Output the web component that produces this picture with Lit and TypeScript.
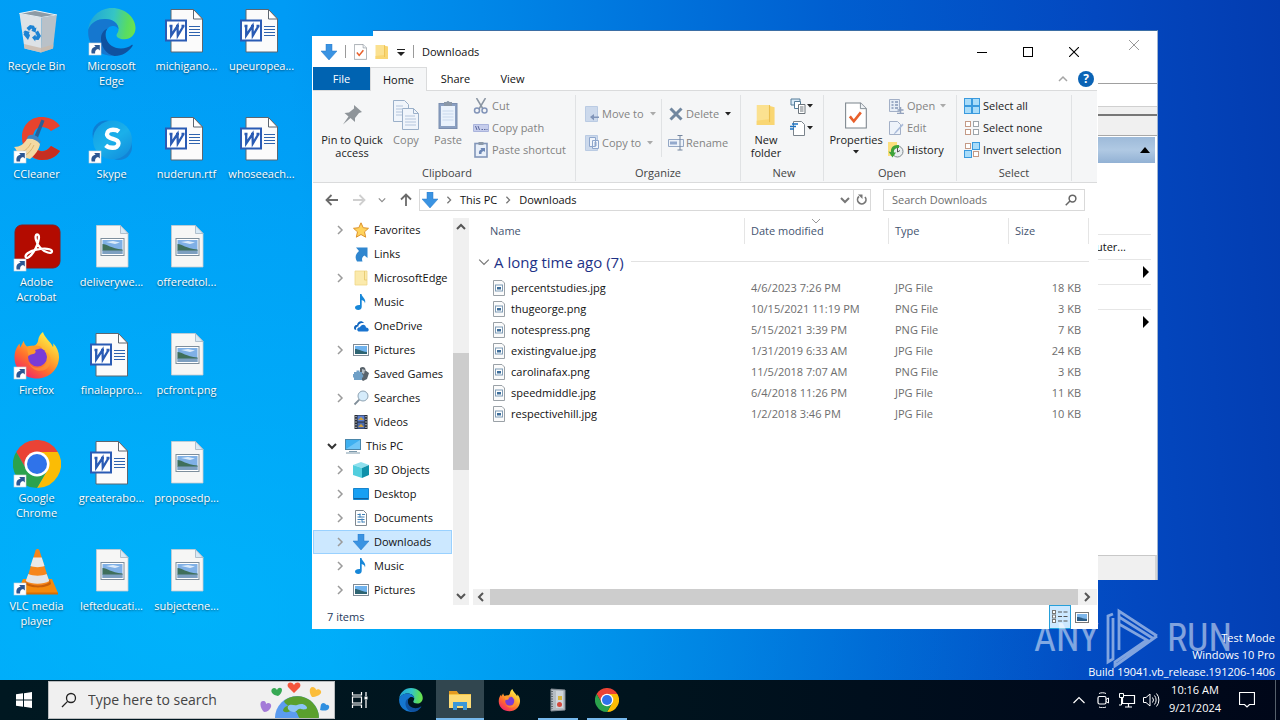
import { LitElement, html, css, svg, nothing, type TemplateResult } from "lit";
import { customElement } from "lit/decorators.js";
import { classMap } from "lit/directives/class-map.js";

type Icon = TemplateResult;

const box = (w: number, h: number, body: unknown, vb = `0 0 ${w} ${h}`): Icon =>
  html`<svg width=${w} height=${h} viewBox=${vb} fill="none" aria-hidden="true">${body}</svg>`;

/* ---------- desktop icons, 48 x 48 ---------- */

const shortcut = svg`<g><rect x="1" y="35" width="12" height="12" fill="#fff" stroke="#c9d3dc" stroke-width=".6"/>
  <path d="M3.600 45.400c-.8-3.800.8-6.200 4-6.600L6.200 37h5.600v5.600l-1.700-1.500c-2.300.5-3.200 1.800-3 4.300z" fill="#2c5793"/></g>`;

const recycle = box(48, 48, svg`
  <path d="M6.500 5.500 22 2.500l21.800 4.500-15.300 2.500z" fill="#8d9ba5" stroke="#eef4f8" stroke-width="1"/>
  <path d="M6.500 5.500 28.500 9.500 28 44.500 11.500 40.500z" fill="#dde2e6"/>
  <path d="M28.500 9.500 43.800 7 40 40.500 28 44.500z" fill="#b9c1c8"/>
  <path d="M11 36l17 4 12.500-3.500-.5 4-12 4-16.500-4z" fill="#cbb9aa" opacity=".8"/>
  <g fill="#1c83d4"><path d="M13.500 20l3.500-3 4 .8 1 2.200 1.400-.6-.8 5-4.400-1.600 1.200-.8-1-1.600-2.400 2.600z"/>
  <path d="M25 22.500l3 5.500-2.500 4-3.200-.2v1.600l-3.300-3.800 3.600-3v1.600h1.400l-1.800-3.600z"/>
  <path d="M12 22.500l5 1.500-1.200 1 1.200 2.500-2 4.500-4.500-5.500.9-2-1.400.1z"/></g>`);

const edgeBody = svg`
  <path d="M24 0C37 0 47.500 9.500 47.500 20c0 7-5 11.200-11 11.200-5 0-8-2-8-4 0-1.500 2-2.500 2-6C30.500 15.500 25 11 17 11 9 11 2.500 16 .3 21.500 1.500 9.500 11.500 0 24 0z" fill="url(#eg)"/>
  <path d="M.3 21.500C3 14 10 11 17 11c8 0 13.500 4.500 13.500 10.200-1.500-2.700-4-3.200-6-3.200-4 0-7.500 4.500-7.500 11 0 9 6 16 14 18C14 51-1.500 38.500.3 21.500z" fill="#1577cf"/>
  <path d="M19.500 20.500C15.500 24.500 17 40 33 40.500c4 0 8-1.500 10.500-3.500 1-.6 1.600.2 1 1C40.500 44 34.500 48 26.500 48 18 46.500 12.500 38 13 30c.3-4.500 2.500-8 6.500-9.500z" fill="#0f52a0"/>`;
const edgeDefs = svg`<defs><linearGradient id="eg" x1="0" y1="14" x2="48" y2="22" gradientUnits="userSpaceOnUse"><stop offset="0" stop-color="#1ea5d8"/><stop offset=".5" stop-color="#35c5c5"/><stop offset=".8" stop-color="#58dc62"/><stop offset="1" stop-color="#6fe34a"/></linearGradient></defs>`;
const edge = (s: number, link = false) => box(s, s, svg`${edgeDefs}${edgeBody}${link ? shortcut : nothing}`, "0 0 48 48");

const ccleaner = box(48, 48, svg`
  <path d="M47 10C42 3 35 1 28 1 17 1 9 10 9 21c0 13 9 23 20 23 8 0 14-3 18-9l-9-5c-3 4-6 5-9 5-6 0-9-6-9-13 0-6 3-11 8-11 4 0 7 1 10 4z" fill="#e8432e"/>
  <path d="M47 35c-4 6-10 9-18 9-3 0-6-1-9-3l4-7c6 3 10 1 14-4z" fill="#c62f22"/>
  <path d="M28.500 3.500l3 1.200-7 18-3.500-1.500z" fill="#2c5f95"/>
  <path d="M15 20c4-3 10-1 13 6l-4 3c-3-3-6-4-11-4z" fill="#3e86c5"/>
  <path d="M14 23c5-1 10 1 13 5-1 6-5 11-10 15-5-1-9-3-12-6l-3-5-1-1c6 0 10-3 13-8z" fill="#f4d9a2"/>
  <path d="M6 36c5 0 9-3 12-9M11 40c4-2 8-6 10-11" stroke="#dcb46e" stroke-width="1"/>${shortcut}`);

const skype = box(48, 48, svg`
  <circle cx="18" cy="18" r="13.500" fill="#0d7fd4"/><circle cx="31" cy="31" r="13" fill="#1284d6"/>
  <circle cx="24.500" cy="24" r="19.500" fill="url(#sk)"/>
  <defs><linearGradient id="sk" x1="10" y1="6" x2="36" y2="44" gradientUnits="userSpaceOnUse"><stop offset="0" stop-color="#119fe6"/><stop offset=".5" stop-color="#1bb0ea"/><stop offset="1" stop-color="#128fdd"/></linearGradient></defs>
  <path d="M31 15.500c-1.600-1.300-3.600-1.800-6-1.800-3.600 0-6 1.700-6 4.500 0 6 11.500 3.300 11.500 9 0 3-2.600 4.600-5.900 4.600-3 0-5.200-.8-7-2.400" stroke="#fff" stroke-width="4.400"/>${shortcut}`);

const acrobat = box(48, 48, svg`
  <rect x="2" y="1" width="45" height="43" rx="7" fill="#b30b00" stroke="#8b1a1a" stroke-width="1"/>
  <path d="M13 33.500c-2-2.500 3-6.200 10.500-7.800 7.500-1.700 15.500-1.200 15.500 1.600 0 3.500-7.500.8-11.500-3.300C23 19.500 21 11 24 10.500c3.300-.4 2 7-1.200 13.500C19.500 30.500 14.800 35.500 13 33.500z" stroke="#fff" stroke-width="2.300"/>${shortcut}`);

const firefoxBody = svg`
  <defs><linearGradient id="ff" x1="38" y1="4" x2="10" y2="44" gradientUnits="userSpaceOnUse"><stop offset="0" stop-color="#fff04a"/><stop offset=".35" stop-color="#ffb02e"/><stop offset=".65" stop-color="#ff6d2d"/><stop offset="1" stop-color="#f0246b"/></linearGradient></defs>
  <path d="M30 0c1 5 7 9 10 15 .5-1 .4-2.500.2-3.800C44 15 46 20 46 25c0 12-9.500 21.500-22 21.500S1.500 37.500 1.500 25.500C1.500 19 4 14.500 6.500 11.500l.7 4 3.500-6.700c.3 2 1.300 4.200 3.300 5.700 2.500-1 5-1 7-.4C23 13 25 11 25.200 8 25.500 5 27.500 1.500 30 0z" fill="url(#ff)"/>
  <circle cx="24.500" cy="25" r="9.500" fill="#7a3bd6"/>
  <path d="M14 16c4-3 12-3.500 15 0l-7 2c2 3-1 4-4 4.500-2 .5-2.500 2-2.500 2z" fill="#ff9a2b"/>
  <path d="M15 29c3 8 13 9 18 3 3-4 2-10-2-13 7 2 8 10 5 15-5 8-18 6-21-5z" fill="#ff9a36" opacity=".6"/>`;
const firefox = (s: number, link = false) => box(s, s, svg`${firefoxBody}${link ? shortcut : nothing}`, "0 0 48 48");

const chromeBody = svg`
  <path d="M24 24V12H44.800A24 24 0 0 1 24 48l10.400-18z" fill="#fbbc05"/>
  <path d="M3.200 12A24 24 0 0 1 44.800 12H24L13.600 30z" fill="#ea4335"/>
  <path d="M3.200 12 13.600 30c2 3.600 6 6 10.400 6 4.400 0 8-2 10.400-6L24 48A24 24 0 0 1 3.200 12z" fill="#2ba24c"/>
  <circle cx="24" cy="24" r="12.500" fill="#fff"/><circle cx="24" cy="24" r="10" fill="#2f73ea"/>`;
const chrome = (s: number, link = false) => box(s, s, svg`${chromeBody}${link ? shortcut : nothing}`, "0 0 48 48");

const vlc = box(48, 48, svg`
  <path d="M10 31h29l6 14H4z" fill="#f58a0c"/><path d="M4 44.500h41v2H4z" fill="#d96d00"/>
  <path d="M12 36c5 4.500 21 4.500 26 0l-1-4H13z" fill="#c95f08"/>
  <path d="M22.500 2.500c.6-2 3.400-2 4 0L36.500 34c-5 4.500-18 4.500-23.500 0z" fill="#f6861b"/>
  <path d="M20.200 9.500h8.600l2.700 8.500c-3.500 1.500-10.500 1.500-14 0z" fill="#e9e9e9"/>
  <path d="M15.300 26c5 2.200 13.500 2.200 18.400 0l2.600 7c-6 3.500-17.500 3.500-23.600 0z" fill="#e4e4e4"/>${shortcut}`);

const wordDoc = box(48, 48, svg`
  <path d="M8 1.500h22.500l9 9.500v33H8z" fill="#fbfbfb" stroke="#5d6670" stroke-width="1"/>
  <path d="M30.500 1.500V11h9z" fill="#fff" stroke="#5d6670" stroke-width="1"/>
  <path d="M26 18.500h11M26 21.500h11M26 24.500h11M26 27.500h11" stroke="#2f63ae" stroke-width="1.200"/>
  <rect x="3" y="12.500" width="20" height="20" fill="#fff" stroke="#2a5bb4" stroke-width="2"/>
  <path d="M6.500 18h3M13 18h3M18.500 18h3M8.200 18v9.500L14.500 18l.3 9.500L20.500 18" stroke="#2a5bb4" stroke-width="2.300"/>`);

const picDoc = box(48, 48, svg`
  <path d="M8.500 1.500h24l7.500 8V43H8.500z" fill="#f6f6f5" stroke="#c9cccf" stroke-width=".8"/>
  <path d="M32.500 1.500v8H40z" fill="#d8e9f5" stroke="#a3b4c2" stroke-width=".8"/>
  <rect x="13" y="14.500" width="23" height="17" fill="#fff" stroke="#7d8e9c"/>
  <rect x="14.500" y="16" width="20" height="14" fill="#7fb0e6"/>
  <path d="M18 18l7-1 7 1.500-5 1.500z" fill="#dcebfa"/>
  <path d="M14.500 20c5 0 8 4.500 20 5.500v1.500h-20z" fill="#3f6f5b"/><path d="M14.500 26.500h20V30h-20z" fill="#7d9fc0"/>`);

/* ---------- small icons ---------- */

const down = (s: number) => box(s, s, svg`<path d="M5 0h6v7h5l-8 9L0 7h5z" fill="#3a93e2" stroke="#2a7bc8" stroke-width=".5"/>`, "0 0 16 16");
const note = box(16, 16, svg`<path d="M7 0h1.500c.5 3.500 5 4.500 3.500 9.500-.3-2-1.700-3-3.300-3.400v6.900c0 1.900-1.600 3-3.400 3C3.200 16 2 15 2 13.500c0-1.700 2-2.700 5-2.500z" fill="#1787d8"/>`);
const picture = box(16, 16, svg`<rect x=".5" y="2.500" width="15" height="11" fill="#fff" stroke="#7f8b96"/><path d="M2 4h12v8H2z" fill="#6fb3ee"/><path d="M2 7c4 0 6 2.500 12 3v2H2z" fill="#2e6472"/>`);
const star = box(16, 16, svg`<path d="M8 .8l2.200 4.900 5.300.6-4 3.500 1.200 5.400L8 12.500l-4.700 2.700 1.200-5.400-4-3.500 5.300-.6z" fill="#ffd35c" stroke="#dd922b"/>`);
const link = box(16, 16, svg`<path d="M3 1.500h11.500V12l-3-2.500c-2.500 1.500-3 3.500-2 6H4C1.500 11.500 2.500 8 6 5z" fill="#2f86cf"/>`);
const folder = (w: number, h: number) => box(w, h, svg`<path d="M1.500 1h9v14h-9z" fill="#fbe190"/><path d="M10 1.500 14 2.500V15H1.500v-3l8.500-1z" fill="#f9d673"/><path d="M10.500 1v12" stroke="#e8b945" stroke-width=".6"/>`, "1 0 14 16");
const paleFolder = box(16, 16, svg`<path d="M2 1h12v14H2z" fill="#fbeaac" stroke="#f0d787" stroke-width=".8"/><path d="M11.500 1v9H14" stroke="#e9cd76"/>`);
const cloud = box(16, 16, svg`<path d="M1.500 11.500C0 8.500 2.500 6.500 4 7 4.500 3 9 2 11 5c-4-.5-6 2-5.500 3.500C3 8.500 2.500 11 3.500 12z" fill="#1165bd"/><path d="M5.500 13.500C3 12 4.500 8.800 7 9.300 8 5.500 13 6 13 9.500c3.500.2 3.500 4 .6 4z" fill="#1a74cf"/>`);
const games = box(16, 16, svg`<path d="M7 2c3-2 6-.5 5.500 2.500L16 7l-2 6-4 2-2-2-1-5z" fill="#59636b"/><path d="M1 6h2.500V4.500h3V6H9v2.500h1.200v3H9V14H1v-2.500H0V8h1z" fill="#6f9fc6"/><path d="M9 3l3 1-1 4-2-1z" fill="#b8c0c6"/>`);
const lens = box(16, 16, svg`<circle cx="10" cy="6" r="5" fill="#d6ecfb" stroke="#8ea3b3"/><path d="M6.300 9.700 1.500 14.500" stroke="#7f8d98" stroke-width="1.800"/>`);
const film = box(16, 16, svg`<path d="M1.500 1h13v14h-13z" fill="#262b33"/><path d="M4.500 1.500h7v6h-7z" fill="#5b7fd0"/><path d="M4.500 8.500h7v6h-7z" fill="#4d6cae"/><path d="M5 6l3-3 3 3zM5 13l3-3 3 3z" fill="#d2a13a"/><path d="M3 2v13M13 2v13" stroke="#fff" stroke-width="1" stroke-dasharray="1.200 1.500"/>`);
const pc = box(16, 16, svg`<rect x=".5" y="1.500" width="15" height="10" fill="#3fb0f0" stroke="#4a86aa"/><path d="M1 11 15 2v9z" fill="#6fc6f7"/><path d="M4 13.500h8M1 15h14" stroke="#7c99ab"/>`);
const cube = box(16, 16, svg`<path d="M0 3l8-3 8 3-7 3z" fill="#8fe0ee"/><path d="M0 3l9 3v10l-9-3z" fill="#52cede"/><path d="M9 6l7-3v10l-7 3z" fill="#0f91aa"/>`);
const desk = box(16, 16, svg`<path d="M.5 2.500h15v11H.5z" fill="#18a0f3" stroke="#1784cd"/><path d="M1 12.500h14" stroke="#135f9a"/>`);
const docs = box(16, 16, svg`<path d="M2.500.5h8l3 3v12h-11z" fill="#fff" stroke="#7f8890"/><path d="M4.500 4.500h3M4.500 7h7M4.500 9.500h7M4.500 12h3M9 12h3M9 4.500h3" stroke="#3e80b8" stroke-width="1.200"/><path d="M7 3.500v4M9 8.500v4" stroke="#3e80b8"/>`);
const fileIcon = box(12, 16, svg`<path d="M.5.500h8.500l2.500 2.500v12.500H.5z" fill="#fbfbfb" stroke="#9aa1a7"/><rect x="2.500" y="5" width="7" height="6" fill="#fff" stroke="#7f9cb6"/><path d="M4 7h4v2.500H4z" fill="#3f6e9a"/>`);
const chev = (d: "r" | "d" | "u" | "l", c = "#8c8c8c", w = 1.500, s = 10) => {
  const p = { r: "M3 1l4 4-4 4", l: "M7 1 3 5l4 4", d: "M1 3l4 4 4-4", u: "M1 7l4-4 4 4" }[d];
  return box(s, s, svg`<path d=${p} stroke=${c} stroke-width=${w}/>`, "0 0 10 10");
};
const caret = (c = "#222") => box(6, 4, svg`<path d="M0 0h6L3 3.500z" fill=${c}/>`);
const checkDoc = (w: number, h: number) => box(w, h, svg`<path d="M.7.700h17l6.500 6.500v22H.7z" fill="#fff" stroke="#7b848c" stroke-width="1.200"/><path d="M17.500.7v6.500h6.500" fill="#eef2f5" stroke="#7b848c"/><path d="M5.500 16l4.500 5.500 8-10" stroke="#e8602c" stroke-width="3"/>`, "0 0 25 30");

const pinIcon = box(24, 24, svg`<path d="M14 2l8 7-3 1-4 5 0 4-4.500-4L3 21.500l5.500-8-4-3.500 4.500-.5 5-4z" fill="#8e9499"/>`);
const copyIcon = box(26, 30, svg`<g stroke="#9bb0c9" fill="#f0f5fb"><path d="M.5.500h11l4 4v17H.5z"/><path d="M9.500 8.500h11l5 5v16h-16z"/></g><path d="M3 6h7M3 9h7M3 12h6M3 15h6M12 16h10M12 19h11M12 22h11M12 25h11" stroke="#b4c5dc"/><path d="M20.500 8.500v5h5" stroke="#9bb0c9"/>`);
const pasteIcon = box(20, 30, svg`<rect x="1" y="3.500" width="18" height="25" fill="#8ba0c2" stroke="#7b8eaf"/><rect x="3" y="6" width="14" height="20" fill="#eaf2fc"/><path d="M6 2h2.500a1.700 1.700 0 0 1 3 0H14v4H6z" fill="#8b98a8"/><path d="M4.500 11h11M4.500 14h11M4.500 17h11M4.500 20h11" stroke="#c9d8ec"/>`);
const cutIcon = box(16, 16, svg`<path d="M3.500 0 10 11M12.500 0 6 11" stroke="#8b96a3" stroke-width="1.500"/><circle cx="4" cy="12.500" r="2.500" stroke="#8294b8" stroke-width="1.500"/><circle cx="11.500" cy="12.500" r="2.500" stroke="#8294b8" stroke-width="1.500"/>`);
const pathIcon = box(16, 16, svg`<path d="M.5 4.500h15v7H.5z" fill="#c6cdec" stroke="#aab4dc"/><path d="M2.500 6l1.500 4M5 6l1.500 4M8.500 9.500h1.500M11 9.500h1.500M13.500 9.500h1" stroke="#5b689d"/>`);
const pasteLink = box(16, 16, svg`<rect x="2" y="1.500" width="12" height="13.500" fill="#e8eff9" stroke="#8296b9" stroke-width="1.600"/><path d="M5.500 0h5v3h-5z" fill="#8b98a8"/><path d="M6 12c-.5-3 .8-4.200 2.300-4.500L7.500 6H12v4l-1.200-1C9 9.400 8.300 10.500 8.500 12z" fill="#6d87b5"/>`);
const moveIcon = box(14, 16, svg`<path d="M.5.500h12v15H.5z" fill="#ccd9ec" stroke="#bacbe3"/><path d="M14 12H9v2.500L5 11l4-3v2.500h5z" fill="#8094b8"/>`);
const copyTo = box(14, 16, svg`<path d="M.5.500h12v15H.5z" fill="#ccd9ec" stroke="#bacbe3"/><path d="M4.500 2.500h6v9h-6z M7.500 5.500h6v8h-6z" fill="#f1f5fb" stroke="#8ea6cc"/><path d="M9 8h3M9 10h3" stroke="#8ea6cc"/>`);
const delIcon = box(14, 14, svg`<path d="M1.500 1.500l11 11M12.500 1.500l-11 11" stroke="#71879f" stroke-width="3"/>`);
const renameIcon = box(16, 16, svg`<path d="M.5 4.500h15v7H.5z" fill="#edf2f9" stroke="#94a7c4"/><path d="M2 6.500h7v3H2z" fill="#93a9cc"/><path d="M9.500.500h5M9.500 15h5M12 1v14" stroke="#74869f"/>`);
const newItem = box(16, 16, svg`<path d="M1 1h9v6H1z" fill="#dbeaf7" stroke="#557d99"/><path d="M4.500 3.500h6v7h-6z" fill="#fff" stroke="#557d99"/><path d="M8.500 6.500h6.500v9H8.500z" fill="#fff" stroke="#6c747b"/><path d="M10 9h3.500M10 11h3.500M10 13h3.500" stroke="#6c747b"/>`);
const easy = box(16, 16, svg`<path d="M3.500 1.500h8l3 3v11h-11z" fill="#fff" stroke="#7b848c"/><path d="M2 4h6M0 6.500h6M0 9h4" stroke="#1c74c5" stroke-width="1.500"/>`);
const openIcon = box(16, 16, svg`<path d="M1.500 1.500h10v12h-10z" fill="#e6edf6" stroke="#a3b0c7"/><path d="M3.500 4h2M7 4h3M3.500 7h2M7 7h3M3.500 10h2M7 10h3" stroke="#8395b7" stroke-width="1.500"/><path d="M12.500 9v6M9.500 12h6M9 15.500h7" stroke="#93a2bd" stroke-width="1.500"/>`);
const editIcon = box(16, 16, svg`<path d="M1.500 1.500h8l3 3v10h-11z" fill="#eef3fa" stroke="#a3b0c7"/><path d="M14.500 3.500 7 12l-1.500 2.500L8 13l7.500-8z" fill="#a9bbda"/>`);
const historyIcon = box(16, 16, svg`<path d="M0 0h9v14H0z" fill="#fbdf7d"/><circle cx="9.500" cy="9.500" r="5.500" fill="#e9eef0" stroke="#7f888e"/><path d="M9.500 6v4l2.500-1.500" stroke="#555"/><path d="M11 3C5 2.500 2.500 6 3 10L.5 9.500l4 6L8 10.500l-2 0C5.500 8 7 6 11 6z" fill="#3ea33b"/>`);
const grid4 = (fills: string[], strokes: string[]) => box(16, 16, svg`${[[1, 1], [9, 1], [1, 9], [9, 9]].map(([x, y], i) => {
  const big = fills[i] !== "#fff";
  return svg`<rect x=${big ? x - .5 : x + .5} y=${big ? y - .5 : y + .5} width=${big ? 7 : 5} height=${big ? 7 : 5} fill=${fills[i]} stroke=${strokes[i]}/>`;
})}`);
const B = "#a9dcf9", BS = "#3a9ade", W = "#fff", G = "#9da5ab", R = "#c49a86";
const selAll = grid4([B, B, B, B], [BS, BS, BS, BS]);
const selNone = grid4([W, W, W, W], [R, G, R, G]);
const selInv = grid4([W, B, B, W], [R, BS, BS, R]);

const lensLine = (s: number, c: string, w: number) => box(s, s, svg`<circle cx="10" cy="6" r="4.500" stroke=${c} stroke-width=${w}/><path d="M6.600 9.400 1 15" stroke=${c} stroke-width=${w}/>`, "0 0 16 16");
const arrow = (c: string, r = 0) => box(14, 14, svg`<path d="M13 7H2M6.500 2 1.500 7l5 5" stroke=${c} stroke-width="1.800" transform=${`rotate(${r} 7 7)`}/>`);

/* ---------- data ---------- */

const desktopIcons: [string, Icon][] = [
  ["Recycle Bin", recycle], ["CCleaner", ccleaner], ["Adobe Acrobat", acrobat], ["Firefox", firefox(48, true)], ["Google Chrome", chrome(48, true)], ["VLC media player", vlc],
  ["Microsoft Edge", edge(48, true)], ["Skype", skype], ["deliverywe...", picDoc], ["finalappro...", wordDoc], ["greaterabo...", wordDoc], ["lefteducati...", picDoc],
  ["michigano...", wordDoc], ["nuderun.rtf", wordDoc], ["offeredtol...", picDoc], ["pcfront.png", picDoc], ["proposedp...", picDoc], ["subjectene...", picDoc],
  ["upeuropea...", wordDoc], ["whoseeach...", wordDoc],
];

const navItems: { label: string; icon: Icon; open?: "r" | "d"; root?: boolean; on?: boolean }[] = [
  { label: "Favorites", icon: star, open: "r" }, { label: "Links", icon: link },
  { label: "MicrosoftEdge", icon: paleFolder, open: "r" }, { label: "Music", icon: note },
  { label: "OneDrive", icon: cloud }, { label: "Pictures", icon: picture, open: "r" },
  { label: "Saved Games", icon: games }, { label: "Searches", icon: lens, open: "r" },
  { label: "Videos", icon: film }, { label: "This PC", icon: pc, open: "d", root: true },
  { label: "3D Objects", icon: cube, open: "r" }, { label: "Desktop", icon: desk, open: "r" },
  { label: "Documents", icon: docs, open: "r" }, { label: "Downloads", icon: down(16), open: "r", on: true },
  { label: "Music", icon: note, open: "r" }, { label: "Pictures", icon: picture, open: "r" },
];

const files = [
  ["percentstudies.jpg", "4/6/2023 7:26 PM", "JPG File", "18 KB"],
  ["thugeorge.png", "10/15/2021 11:19 PM", "PNG File", "3 KB"],
  ["notespress.png", "5/15/2021 3:39 PM", "PNG File", "7 KB"],
  ["existingvalue.jpg", "1/31/2019 6:33 AM", "JPG File", "24 KB"],
  ["carolinafax.png", "11/5/2018 7:07 AM", "PNG File", "3 KB"],
  ["speedmiddle.jpg", "6/4/2018 11:26 PM", "JPG File", "11 KB"],
  ["respectivehill.jpg", "1/2/2018 3:46 PM", "JPG File", "10 KB"],
];

const shared = css`
  * { box-sizing: border-box; }
  svg { display: block; flex: none; }
  button { font: inherit; color: inherit; background: none; border: 0; padding: 0; margin: 0; text-align: inherit; }
  a { color: inherit; text-decoration: none; }
  input { font: inherit; min-width: 0; border: 0; padding: 0; background: none; outline: 0; }
`;

@customElement("explorer-window")
class ExplorerWindow extends LitElement {
  static styles = [shared, css`
    :host { display: flex; flex-direction: column; background: #fff; padding: 0 1px; color: #111; font: 11px/14px "Open Sans", "Noto Sans", sans-serif; }
    .title { display: flex; align-items: center; height: 31px; padding-left: 8px; flex: none; }
    .title .bar { width: 1px; height: 13px; background: #9a9a9a; }
    .quick { display: flex; align-items: center; gap: 8px; flex: 1; }
    .quick h1 { margin: 0; font-size: 11px; font-weight: 400; }
    .ctl { width: 46px; height: 30px; display: grid; place-items: center; }
    .tabs { display: flex; height: 24px; border-bottom: 1px solid #dadbdc; flex: none; align-items: stretch; }
    .tab { width: 57px; text-align: center; }
    .file { background: #0063b1; color: #fff; }
    .home { background: #f5f6f7; border: 1px solid #dadbdc; border-bottom: 0; height: 24px; }
    .tools { margin-left: auto; display: flex; align-items: center; gap: 10px; padding-right: 3px; }
    .help { width: 16px; height: 16px; border-radius: 50%; background: #0a63b5; color: #fff; font-weight: 700; text-align: center; line-height: 16px; font-size: 12px; }
    .ribbon { display: flex; height: 92px; background: #f5f6f7; border-bottom: 1px solid #dadbdc; flex: none; padding-top: 4px; color: #222; }
    .group { display: flex; flex-direction: column; border-right: 1px solid #e0e2e4; margin-bottom: 1px; flex: none; }
    .group h2 { margin: 0; font-size: 11px; font-weight: 400; text-align: center; color: #444; line-height: 16px; }
    .body { display: flex; flex: 1; }
    .clip { width: 263px; padding-left: 6px; } .org { width: 165px; } .new { width: 83px; padding-left: 4px; } .opn { width: 133px; padding-left: 4px; } .sel { width: 115px; }
    .sel .body { padding-left: 7px; }
    .big { display: flex; flex-direction: column; align-items: center; text-align: center; line-height: 13px; padding-top: 2px; align-self: flex-start; white-space: pre-line; }
    .big .pic { height: 36px; display: grid; place-items: center; }
    .big .arrow { height: 12px; display: grid; place-items: center; }
    .clip .big { width: 42px; } .clip .big.wide { width: 66px; } .new .big { width: 42px; } .opn .big { width: 56px; }
    .col { display: flex; flex-direction: column; }
    .small { display: flex; align-items: center; gap: 3px; height: 22px; white-space: nowrap; }
    .small .pic { width: 16px; display: grid; place-items: center; }
    .dim { color: #838383; }
    .clip .col { padding-left: 4px; }
    .org .col { padding: 8px 0 0 8px; gap: 7px; width: 85px; }
    .org .col + .col { border-left: 1px solid #e0e2e4; margin: 4px 0 8px; padding: 4px 0 0 6px; width: 78px; }
    .org .small { gap: 2px; } .org .caret { margin-left: 4px; }
    .opn .col { padding-left: 4px; } .opn .caret { margin-left: 2px; } .new .col { padding-left: 3px; }
    .new .small { gap: 1px; }
    .address { display: flex; align-items: center; height: 35px; flex: none; padding: 0 12px 2px; }
    .address .nav { display: flex; align-items: center; justify-content: space-between; width: 88px; margin-right: 6px; }
    .crumbs { display: flex; align-items: center; gap: 7px; flex: 1; height: 22px; border: 1px solid #d9d9d9; padding-left: 2px; }
    .crumbs .end { margin-left: auto; display: flex; align-items: center; height: 100%; }
    .crumbs .refresh { width: 17px; height: 100%; border-left: 1px solid #d9d9d9; display: grid; place-items: center; margin-left: 3px; }
    .find { display: flex; align-items: center; width: 202px; height: 22px; border: 1px solid #d9d9d9; margin-left: 12px; padding: 0 7px 0 8px; }
    .find input { flex: 1; } .find input::placeholder { color: #6d6d6d; opacity: 1; }
    .panes { display: flex; flex: 1; min-height: 0; }
    .tree { width: 139px; overflow: hidden; flex: none; }
    .item { display: flex; align-items: center; height: 24px; padding-left: 21px; white-space: nowrap; border: 1px solid transparent; color: #111; }
    .item.root { padding-left: 13px; }
    .item .tw { width: 10px; margin-right: 8px; } .item .ico { margin-right: 5px; width: 16px; }
    .item.on { background: #cce8ff; border-color: #99d1ff; }
    .vbar { width: 16px; margin: 0 1px; background: #f0f0f0; display: flex; flex-direction: column; align-items: center; justify-content: space-between; padding: 4px 0; }
    .vbar .thumb { width: 100%; height: 31%; background: #cdcdcd; }
    .list { flex: 1; display: flex; flex-direction: column; min-width: 0; }
    table { border-collapse: separate; border-spacing: 0; table-layout: fixed; width: calc(100% - 8px); }
    .c-date { width: 144px; } .c-type { width: 120px; } .c-size { width: 80px; }
    thead th { height: 26px; font-weight: 400; text-align: left; color: #44546f; padding: 0 6px; border-right: 1px solid #e5e5e5; position: relative; }
    thead th:first-child { padding-left: 20px; }
    .sort { position: absolute; left: 66px; top: -2px; }
    .grp { height: 33px; font-weight: 400; padding: 2px 0 0 8px; }
    .grp div { display: flex; align-items: center; gap: 4px; color: #1e3287; font-size: 15px; line-height: 20px; }
    .grp div::after { content: ""; flex: 1; height: 1px; background: #e2e2e2; margin-left: 3px; }
    tbody td { height: 21px; padding: 0 8px 0 6px; color: #6d6d6d; white-space: nowrap; }
    tbody td:first-child { padding-left: 23px; color: #111; }
    .name { display: flex; align-items: center; gap: 6px; }
    tbody td.num { text-align: right; }
    .hbar { margin-top: auto; height: 16px; background: #f0f0f0; display: flex; align-items: center; gap: 4px; padding: 0 5px 0 3px; margin-left: 3px; }
    .hbar .thumb { flex: 1; height: 100%; background: #cdcdcd; }
    .status { display: flex; align-items: center; height: 24px; flex: none; padding: 0 8px 0 14px; color: #1e395b; }
    .status span { flex: 1; }
    .view { width: 22px; height: 24px; display: grid; place-items: center; }
    .view.on { background: #cce8ff; border: 1px solid #26a0da; margin-right: 4px; }
    .view.last { width: 14px; }
  `];

  big(icon: Icon, label: string, cls = "", arrow = false) {
    return html`<button class="big ${cls}"><span class="pic">${icon}</span>${label}${arrow ? html`<span class="arrow">${caret()}</span>` : nothing}</button>`;
  }

  small(icon: Icon, label: string, dim = false, arrow: string | null = null) {
    return html`<button class=${classMap({ small: true, dim })} aria-label=${label || "New item"}><span class="pic">${icon}</span>${label}${arrow ? html`<span class="caret">${caret(arrow)}</span>` : nothing}</button>`;
  }

  render() {
    return html`
      <header class="title">
        <div class="quick">
          ${down(16)}<span class="bar"></span>${checkDoc(13, 16)}${folder(14, 16)}
          ${box(8, 8, svg`<path d="M0 1.500h8" stroke="#222"/><path d="M0 4h8L4 8z" fill="#222"/>`)}
          <span class="bar"></span><h1>Downloads</h1>
        </div>
        <button class="ctl" aria-label="Minimize">${box(10, 10, svg`<path d="M0 5.500h10" stroke="#000"/>`)}</button>
        <button class="ctl" aria-label="Maximize">${box(10, 10, svg`<rect x=".5" y=".5" width="9" height="9" stroke="#000"/>`)}</button>
        <button class="ctl" aria-label="Close">${box(10, 10, svg`<path d="M0 0l10 10M10 0 0 10" stroke="#000" stroke-width="1.100"/>`)}</button>
      </header>
      <nav class="tabs">
        <button class="tab file">File</button><button class="tab home">Home</button><button class="tab">Share</button><button class="tab">View</button>
        <div class="tools">${chev("u", "#a5a5a5", 1.500)}<button class="help" aria-label="Help">?</button></div>
      </nav>
      <section class="ribbon">
        <div class="group clip"><div class="body">
          ${this.big(pinIcon, "Pin to Quick\naccess", "wide")}${this.big(copyIcon, "Copy", "dim")}${this.big(pasteIcon, "Paste", "dim")}
          <div class="col">${this.small(cutIcon, "Cut", true)}${this.small(pathIcon, "Copy path", true)}${this.small(pasteLink, "Paste shortcut", true)}</div>
        </div><h2>Clipboard</h2></div>
        <div class="group org"><div class="body">
          <div class="col">${this.small(moveIcon, "Move to", true, "#aaa")}${this.small(copyTo, "Copy to", true, "#aaa")}</div>
          <div class="col">${this.small(delIcon, "Delete", true, "#222")}${this.small(renameIcon, "Rename", true)}</div>
        </div><h2>Organize</h2></div>
        <div class="group new"><div class="body">
          ${this.big(folder(20, 26), "New\nfolder")}
          <div class="col">${this.small(newItem, "", false, "#222")}${this.small(easy, "", false, "#222")}</div>
        </div><h2>New</h2></div>
        <div class="group opn"><div class="body">
          ${this.big(checkDoc(22, 29), "Properties", "", true)}
          <div class="col">${this.small(openIcon, "Open", true, "#aaa")}${this.small(editIcon, "Edit", true)}${this.small(historyIcon, "History")}</div>
        </div><h2>Open</h2></div>
        <div class="group sel"><div class="body">
          <div class="col">${this.small(selAll, "Select all")}${this.small(selNone, "Select none")}${this.small(selInv, "Invert selection")}</div>
        </div><h2>Select</h2></div>
      </section>
      <div class="address">
        <div class="nav">
          <button aria-label="Back">${arrow("#6b6b6b")}</button><button aria-label="Forward">${arrow("#cfcfcf", 180)}</button>
          <button aria-label="Recent">${chev("d", "#8c8c8c", 1.500, 8)}</button><button aria-label="Up">${arrow("#6b6b6b", 90)}</button>
        </div>
        <div class="crumbs">
          ${down(16)}${chev("r", "#777", 1.600, 8)}<a href="#pc">This PC</a>${chev("r", "#777", 1.600, 8)}<a href="#downloads">Downloads</a>
          <div class="end">${chev("d", "#777", 2)}<button class="refresh" aria-label="Refresh">${box(12, 12, svg`<path d="M3 2.500A4.200 4.200 0 1 0 9 3" stroke="#777" stroke-width="1.700"/><path d="M2 .5h4.500V5z" fill="#777"/>`)}</button></div>
        </div>
        <label class="find"><input type="search" aria-label="Search Downloads" placeholder="Search Downloads">${lensLine(12, "#666", 2)}</label>
      </div>
      <div class="panes">
        <nav class="tree">${navItems.map((n) => html`
          <a href="#" class=${classMap({ item: true, root: !!n.root, on: !!n.on })}>
            <span class="tw">${n.open ? chev(n.open, n.root ? "#333" : "#9b9b9b", n.root ? 2 : 1.500) : nothing}</span>
            <span class="ico">${n.icon}</span>${n.label}</a>`)}
        </nav>
        <div class="vbar">${chev("u", "#555", 2)}<div class="thumb"></div>${chev("d", "#555", 2)}</div>
        <div class="list">
          <table>
            <colgroup><col><col class="c-date"><col class="c-type"><col class="c-size"></colgroup>
            <thead><tr><th>Name</th><th>Date modified<span class="sort">${chev("d", "#999", 1)}</span></th><th>Type</th><th>Size</th></tr></thead>
            <tbody>
              <tr><th class="grp" colspan="4"><div>${chev("d", "#777", 1, 12)}A long time ago (7)</div></th></tr>
              ${files.map(([n, d, t, s]) => html`<tr><td><span class="name">${fileIcon}${n}</span></td><td>${d}</td><td>${t}</td><td class="num">${s}</td></tr>`)}
            </tbody>
          </table>
          <div class="hbar">${chev("l", "#555", 2)}<div class="thumb"></div>${chev("r", "#555", 2)}</div>
        </div>
      </div>
      <footer class="status"><span>7 items</span>
        <button class="view on" aria-label="Details">${box(16, 14, svg`${[1, 5.500, 10].map((y) => svg`<rect x=".5" y=${y - .5} width="3" height="3" fill="#fff" stroke="#777"/><path d=${`M6 ${y + 1}h4M11.500 ${y + 1}h4`} stroke="#555"/>`)}`)}</button>
        <button class="view last" aria-label="Large icons">${box(14, 11, svg`<rect x=".5" y=".5" width="13" height="10" fill="#fff" stroke="#777"/><path d="M2 2h10v7H2z" fill="#7db6ea"/><path d="M2 5c4 0 5 1.500 10 2v2H2z" fill="#2c5d86"/>`)}</button>
      </footer>`;
  }
}

@customElement("console-window")
class ConsoleWindow extends LitElement {
  static styles = [shared, css`
    :host { display: flex; flex-direction: column; background: #fff; border-right: 1px solid #9fb4d0; border-top: 1px solid #3b6ea5; font: 11px/14px "Open Sans", "Noto Sans", sans-serif; color: #111; }
    .title { height: 53px; border-bottom: 1px solid #a0a0a0; display: flex; justify-content: flex-end; align-items: flex-start; padding: 8px 17px; }
    .menu { height: 23px; border-bottom: 1px solid #d0d0d0; }
    .tool { height: 9px; background: #f0f0f0; border-bottom: 2px solid #777; }
    .head { height: 20px; background: #f0f0f0; border-bottom: 1px solid #a8a8a8; }
    .bar { height: 26px; margin: 1px 2px 0 0; background: linear-gradient(#9dbad9, #b0c9e3 50%, #92b1d4); display: flex; align-items: center; justify-content: flex-end; padding-right: 5px; }
    .row { height: 25px; border-bottom: 1px solid #e6e6e6; margin-right: 6px; display: flex; align-items: center; justify-content: flex-end; padding-right: 2px; }
    .row.tall { height: 72px; } .row.text { padding-right: 25px; } .row.last { border: 0; height: 24px; }
    .status { margin-top: auto; height: 25px; background: #f0f0f0; border-top: 1px solid #c8c8c8; border-right: 2px solid #d5d5d5; }
  `];
  render() {
    const tri = box(6, 12, svg`<path d="M0 0l6 6-6 6z" fill="#000"/>`);
    return html`
      <div class="title"><button aria-label="Close console">${box(12, 12, svg`<path d="M1 1l10 10M11 1 1 11" stroke="#999"/>`)}</button></div>
      <div class="menu"></div><div class="tool"></div><div class="head"></div>
      <div class="bar">${box(10, 6, svg`<path d="M0 6h10L5 0z" fill="#000"/>`)}</div>
      <div class="row tall"></div><div class="row text">uter...</div><div class="row">${tri}</div><div class="row"></div><div class="row last">${tri}</div>
      <div class="status"></div>`;
  }
}

@customElement("task-bar")
class TaskBar extends LitElement {
  static styles = [shared, css`
    :host { display: flex; align-items: stretch; height: 40px; background: linear-gradient(90deg, #001821, #00141e 50%, #000a1c 85%, #000719); color: #fff; font: 11px/18px "Open Sans", "Noto Sans", sans-serif; }
    .start, .app { width: 48px; display: grid; place-items: center; flex: none; position: relative; }
    .apps { display: flex; gap: 1px; } .apps .app:first-child { margin-right: 2px; }
    .on { background: #31464f; }
    .run::after { content: ""; position: absolute; left: 4px; right: 4px; bottom: 0; height: 2px; background: #76b9ed; }
    .on::after { left: 0; right: 0; }
    .search { display: flex; align-items: center; width: 287px; margin: 1px 1px 1px 0; background: #f0f0f0; border: 1px solid #b9bcbe; padding-left: 12px; gap: 11px; overflow: hidden; }
    .search input { flex: 1; font-size: 14px; } .search input::placeholder { color: #444; opacity: 1; }
    .tray { margin-left: auto; display: flex; align-items: center; gap: 6px; }
    .clock { text-align: center; width: 58px; padding-bottom: 2px; }
    .note { margin: 0 14px 0 9px; }
    .peek { width: 5px; height: 40px; border-left: 1px solid #56606b; }
  `];
  render() {
    const w = "#fff";
    return html`
      <button class="start" aria-label="Start">${box(16, 16, svg`<path d="M0 2.300 7 1.300v6.200H0zM8 1.200 16 0v7.500H8zM0 8.500h7v6.200l-7-1zM8 8.500h8V16l-8-1.200z" fill="#fff"/>`)}</button>
      <label class="search">${lensLine(16, "#222", 1.300)}<input type="text" aria-label="Search" placeholder="Type here to search">
        ${box(74, 38, svg`
          <circle cx="37" cy="37" r="22" fill="#5b9cf0"/>
          <path d="M24 20c6-6 20-7 28 1 7 7 8 16 6 17H40c-3-4-2-7-6-8s-5 2-9 1-1-5 2-6-2-1-3-5z" fill="#5aa02e"/>
          <path d="M28 25c3-3 6 0 9-1s6-2 9 1-1 4-5 3-4 4-8 3-6-3-5-6z" fill="#8cc4f5"/>
          <path d="M34 12l-6-6c-2-5 4-6 6-2 2-4 8-3 6 2z" fill="#f4553b"/>
          <path d="M18 15c-5-1-8-4-6-7 2-2 4-1 5 1 1-3 5-3 5 0 0 2-2 5-4 6z" fill="#36a853"/>
          <path d="M4 31C0 27-1 20 3 20c3 0 3 2 3 3 2-2 6-1 5 3-1 3-4 5-7 5z" fill="#a47bd8"/>
          <path d="M52 16c-3-4-3-9 0-10 3 0 4 2 4 3 2-2 6 0 5 3-1 2-5 4-9 4z" fill="#fbbd3a"/>
          <path d="M60 29c1-3 0-6 3-7 2 0 3 1 3 2 2-1 4 1 3 3-1 3-5 3-9 2z" fill="#2f8fe0"/>`)}
      </label>
      <div class="apps">
        <button class="app" aria-label="Task view">${box(18, 16, svg`<path d="M1.500 0v3h9V0M1.500 16v-3h9v3M1.500 5h9v6h-9zM15 0v4M15 8v8" stroke=${w} stroke-width="1.200"/><rect x="13.500" y="4.500" width="3" height="3" fill=${w}/>`)}</button>
        <button class="app" aria-label="Edge">${edge(24)}</button>
        <button class="app run on" aria-label="File Explorer">${box(22, 20, svg`<path d="M0 2h8l2 2h12v14H0z" fill="#f6c544"/><path d="M0 1h8l1 3H0z" fill="#e49b20"/><path d="M0 5h22v13H0z" fill="#fddc76"/><path d="M4 12h14v8h-4v-4H8v4H4z" fill="#3c98d8"/>`)}</button>
        <button class="app" aria-label="Firefox">${firefox(23)}</button>
        <button class="app run" aria-label="Task Manager">${box(18, 24, svg`<path d="M2 1l14 1v20l-14 1z" fill="#b5bcc3" stroke="#828a92"/><path d="M7 3h7v17H7z" fill="#cfd5da"/><path d="M3 3v18" stroke="#606970" stroke-dasharray="1 1.500" stroke-width="2"/><rect x="9" y="8" width="4" height="4" fill="#d8b53c"/><circle cx="10.500" cy="16.500" r="2.500" fill="#d4483d"/>`)}</button>
        <button class="app run" aria-label="Chrome">${chrome(24)}</button>
      </div>
      <div class="tray">
        ${box(18, 16, svg`<path d="M3.500 11 9 5.500l5.500 5.500" stroke=${w} stroke-width="1.200"/>`)}
        ${box(18, 16, svg`<rect x="4" y="4.500" width="8" height="7.500" rx="1.500" stroke=${w} stroke-width="1.200"/><path d="M12 7.500 14.500 6v5L12 9.500M5 1.500c2-1 5-1 7 0M5 15c2 1 5 1 7 0" stroke=${w}/>`)}
        ${box(18, 16, svg`<path d="M4.500 3.500h12v8h-12zM10.500 11.500V15M7 15h7" stroke=${w} stroke-width="1.200"/><path d="M1.500 1.500h4v4h-4zM3.500 5.500V13H1" fill="#00101c" stroke=${w}/>`)}
        ${box(18, 16, svg`<path d="M1.500 5.500h2.500L8 2v12l-4-3.500H1.500z" stroke=${w}/><path d="M10.500 5.500a4 4 0 0 1 0 5M12.500 3.500a7 7 0 0 1 0 9M14.500 1.500a10 10 0 0 1 0 13" stroke=${w}/>`)}
        <div class="clock">10:16 AM<br>9/21/2024</div>
        <button class="note" aria-label="Notifications">${box(16, 16, svg`<path d="M.5.500h15v12h-5L8 15l-2.500-2.500h-5z" stroke=${w} stroke-width="1.200"/>`)}</button>
        <span class="peek"></span>
      </div>`;
  }
}

@customElement("app-root")
class AppRoot extends LitElement {
  static styles = [shared, css`
    :host { display: flex; flex-direction: column; height: 100vh; overflow: hidden; font: 11px/15px "Open Sans", "Noto Sans", sans-serif; }
    .desktop { position: relative; flex: 1; min-height: 0; overflow: hidden;
      background: radial-gradient(ellipse 70% 85% at 15% 90%, rgba(0, 195, 255, .55), rgba(0, 195, 255, .3) 45%, rgba(0, 195, 255, 0)), linear-gradient(86deg, #009ff6, #009bf5 25%, #0084e6 42%, #005fd0 66%, #0348c0 86%, #033cb0); }
    .icons { display: grid; grid-auto-flow: column; grid-template-rows: repeat(6, 108px); grid-auto-columns: 75px; justify-content: start; }
    .shortcut { display: flex; flex-direction: column; align-items: center; gap: 2px; padding: 8px 5px 0 3px; color: #fff; text-align: center; text-shadow: 0 1px 2px rgba(0, 0, 0, .55); }
    .shortcut span { max-width: 70px; }
    .console { position: absolute; left: 373px; top: 30px; width: 785px; height: 550px; }
    .explorer { position: absolute; left: 312px; top: 36px; width: 786px; height: 593px; }
    .build { position: absolute; right: 5px; bottom: 0; text-align: right; color: #fff; line-height: 17px; }
    .mark { position: absolute; right: 48px; bottom: 12px; display: flex; align-items: center; gap: 6px; color: #fff; opacity: .5; font: 400 38px/60px "Roboto Condensed", "Liberation Sans Narrow", Roboto, sans-serif; }
  `];
  render() {
    return html`
      <main class="desktop">
        <div class="icons">${desktopIcons.map(([l, i]) => html`<a class="shortcut" href="#">${i}<span>${l}</span></a>`)}</div>
        <console-window class="console"></console-window>
        <explorer-window class="explorer"></explorer-window>
        <div class="mark"><span>ANY</span>${box(56, 60, svg`<path d="M8 6 3 8v46l5-3V10M14 42V3l38 25M14 3v6l35 22M14 16l28 16-32 22v4l42-30" stroke="#fff" stroke-width="2.800"/>`)}<span>RUN</span></div>
        <div class="build">Test Mode<br>Windows 10 Pro<br>Build 19041.vb_release.191206-1406</div>
      </main>
      <task-bar></task-bar>`;
  }
}
